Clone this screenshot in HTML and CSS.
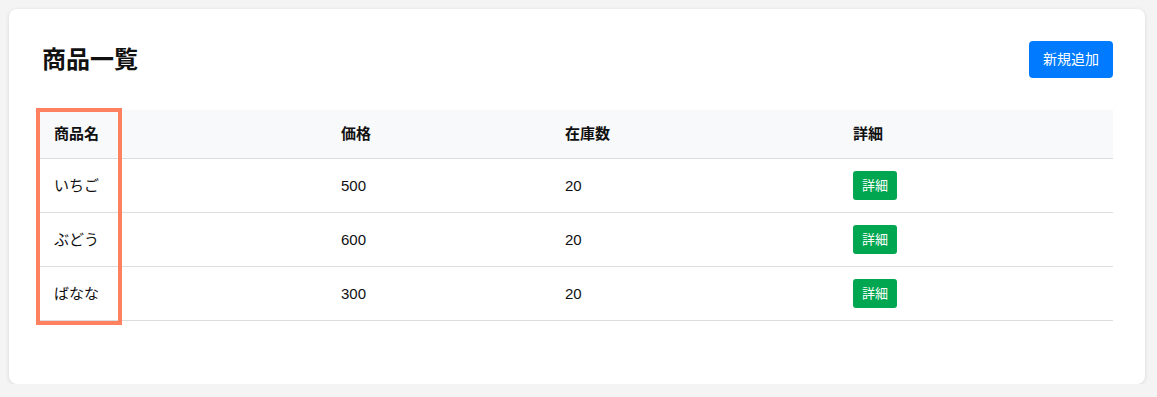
FILE: index.html
```html
<!DOCTYPE html>
<html lang="ja">
<head>
    <meta charset="UTF-8">
    <meta name="viewport" content="width=device-width, initial-scale=1.0">
    <title>商品一覧</title>
    <link rel="stylesheet" href="styles.css">
</head>
<body>
    <div class="card">
        <div class="card-header">
            <h1>商品一覧</h1>
            <button class="btn btn-primary">新規追加</button>
        </div>

        <div class="table-wrap">
            <table class="product-table">
                <colgroup>
                    <col class="col-name">
                    <col class="col-price">
                    <col class="col-stock">
                    <col class="col-detail">
                </colgroup>
                <thead>
                    <tr>
                        <th>商品名</th>
                        <th>価格</th>
                        <th>在庫数</th>
                        <th>詳細</th>
                    </tr>
                </thead>
                <tbody>
                    <tr>
                        <td>いちご</td>
                        <td>500</td>
                        <td>20</td>
                        <td><a class="btn-detail" href="#">詳細</a></td>
                    </tr>
                    <tr>
                        <td>ぶどう</td>
                        <td>600</td>
                        <td>20</td>
                        <td><a class="btn-detail" href="#">詳細</a></td>
                    </tr>
                    <tr>
                        <td>ばなな</td>
                        <td>300</td>
                        <td>20</td>
                        <td><a class="btn-detail" href="#">詳細</a></td>
                    </tr>
                </tbody>
            </table>
            <!-- highlight over the first column -->
            <div class="column-highlight"></div>
        </div>
    </div>
</body>
</html>
```

FILE: styles.css
```css
* {
    margin: 0;
    padding: 0;
    box-sizing: border-box;
}

body {
    font-family: "Liberation Sans", "Noto Sans CJK JP", sans-serif;
    background-color: #f4f4f4;
    color: #111;
    padding: 9px 12px 0 9px;
}

.card {
    background-color: #fff;
    border-radius: 8px;
    box-shadow: 0 1px 4px rgba(0, 0, 0, 0.12);
    padding: 32px 32px 63px 31px;
}

.card-header {
    display: flex;
    justify-content: space-between;
    align-items: center;
    margin-bottom: 32px;
}

h1 {
    font-size: 24px;
    font-weight: bold;
    line-height: 29px;
    padding-left: 2px;
}

.btn {
    border: none;
    cursor: pointer;
    font-family: inherit;
}

.btn-primary {
    background-color: #007bff;
    color: #fff;
    font-size: 14px;
    line-height: 21px;
    padding: 8px 14px;
    border-radius: 4px;
}

.table-wrap {
    position: relative;
}

.product-table {
    width: 100%;
    border-collapse: collapse;
    table-layout: fixed;
    font-size: 15px;
}

.col-name { width: 287px; }
.col-price { width: 224px; }
.col-stock { width: 288px; }
.col-detail { width: 274px; }

.product-table th,
.product-table td {
    text-align: left;
    padding: 12px 14px;
    border-bottom: 1px solid #dddddd;
}

.product-table th {
    background-color: #f8f9fa;
    font-weight: bold;
    line-height: 24px;
}

.product-table td {
    line-height: 29px;
    vertical-align: middle;
}

.btn-detail {
    display: inline-block;
    vertical-align: top;
    background-color: #00a650;
    color: #fff;
    font-size: 13px;
    line-height: 19px;
    padding: 5px 9px;
    border-radius: 3px;
    text-decoration: none;
}

.column-highlight {
    position: absolute;
    left: -4px;
    top: -2px;
    width: 86px;
    height: 217px;
    border: 4px solid #ff8160;
    pointer-events: none;
}
```
